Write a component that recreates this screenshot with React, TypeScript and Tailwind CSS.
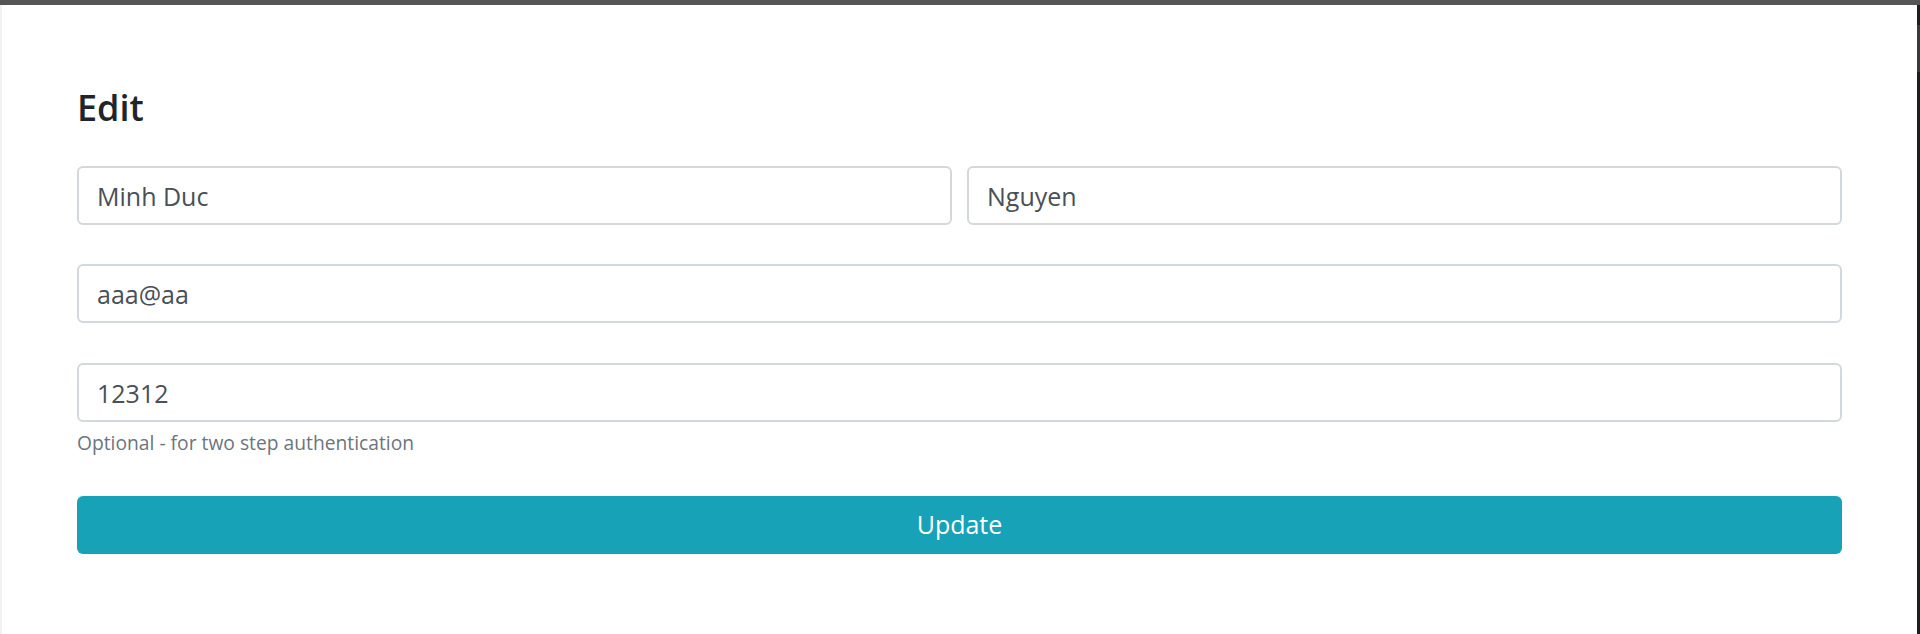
import React, { useState } from "react";

const font = { fontFamily: '"Open Sans", "Noto Sans", Arial, sans-serif' };

const App = () => {
  const [firstName, setFirstName] = useState("Minh Duc");
  const [lastName, setLastName] = useState("Nguyen");
  const [email, setEmail] = useState("aaa@aa");
  const [phone, setPhone] = useState("12312");

  const inputClass =
    "w-full h-[59px] rounded-[6px] border-2 border-[#d3d8dd] bg-white px-[18px] text-[25px] text-[#495057] outline-none";

  return (
    <div className="min-h-screen flex flex-col bg-white" style={font}>
      <div className="h-[5px] bg-[#555555]" />
      <div className="flex flex-1">
        <div className="w-[2px] bg-[#f2f2f2]" />
        <main className="flex-1 pl-[75px] pr-[75px] pt-[81px]">
          <h3 className="text-[36px] leading-[1.2] font-semibold text-[#212529]">
            Edit
          </h3>
          <form className="mt-[37px] flex flex-col">
            <div className="flex gap-[15px]">
              <input
                className={inputClass}
                value={firstName}
                onChange={(e) => setFirstName(e.target.value)}
              />
              <input
                className={inputClass}
                value={lastName}
                onChange={(e) => setLastName(e.target.value)}
              />
            </div>
            <input
              className={inputClass + " mt-[39px]"}
              value={email}
              onChange={(e) => setEmail(e.target.value)}
            />
            <input
              className={inputClass + " mt-[40px]"}
              value={phone}
              onChange={(e) => setPhone(e.target.value)}
            />
            <small className="mt-[8px] text-[19.25px] leading-[1.4] text-[#6c757d]">
              Optional - for two step authentication
            </small>
            <button
              type="button"
              className="mt-[39px] h-[58px] w-full rounded-[6px] bg-[#17a2b8] text-[25px] text-white"
            >
              Update
            </button>
          </form>
        </main>
        <div className="w-[3px] bg-[#1e1e1e] flex flex-col">
          <div className="h-[20px]" />
          <div className="h-[47px] bg-[#3a3a3a]" />
        </div>
      </div>
    </div>
  );
};

export default App;
